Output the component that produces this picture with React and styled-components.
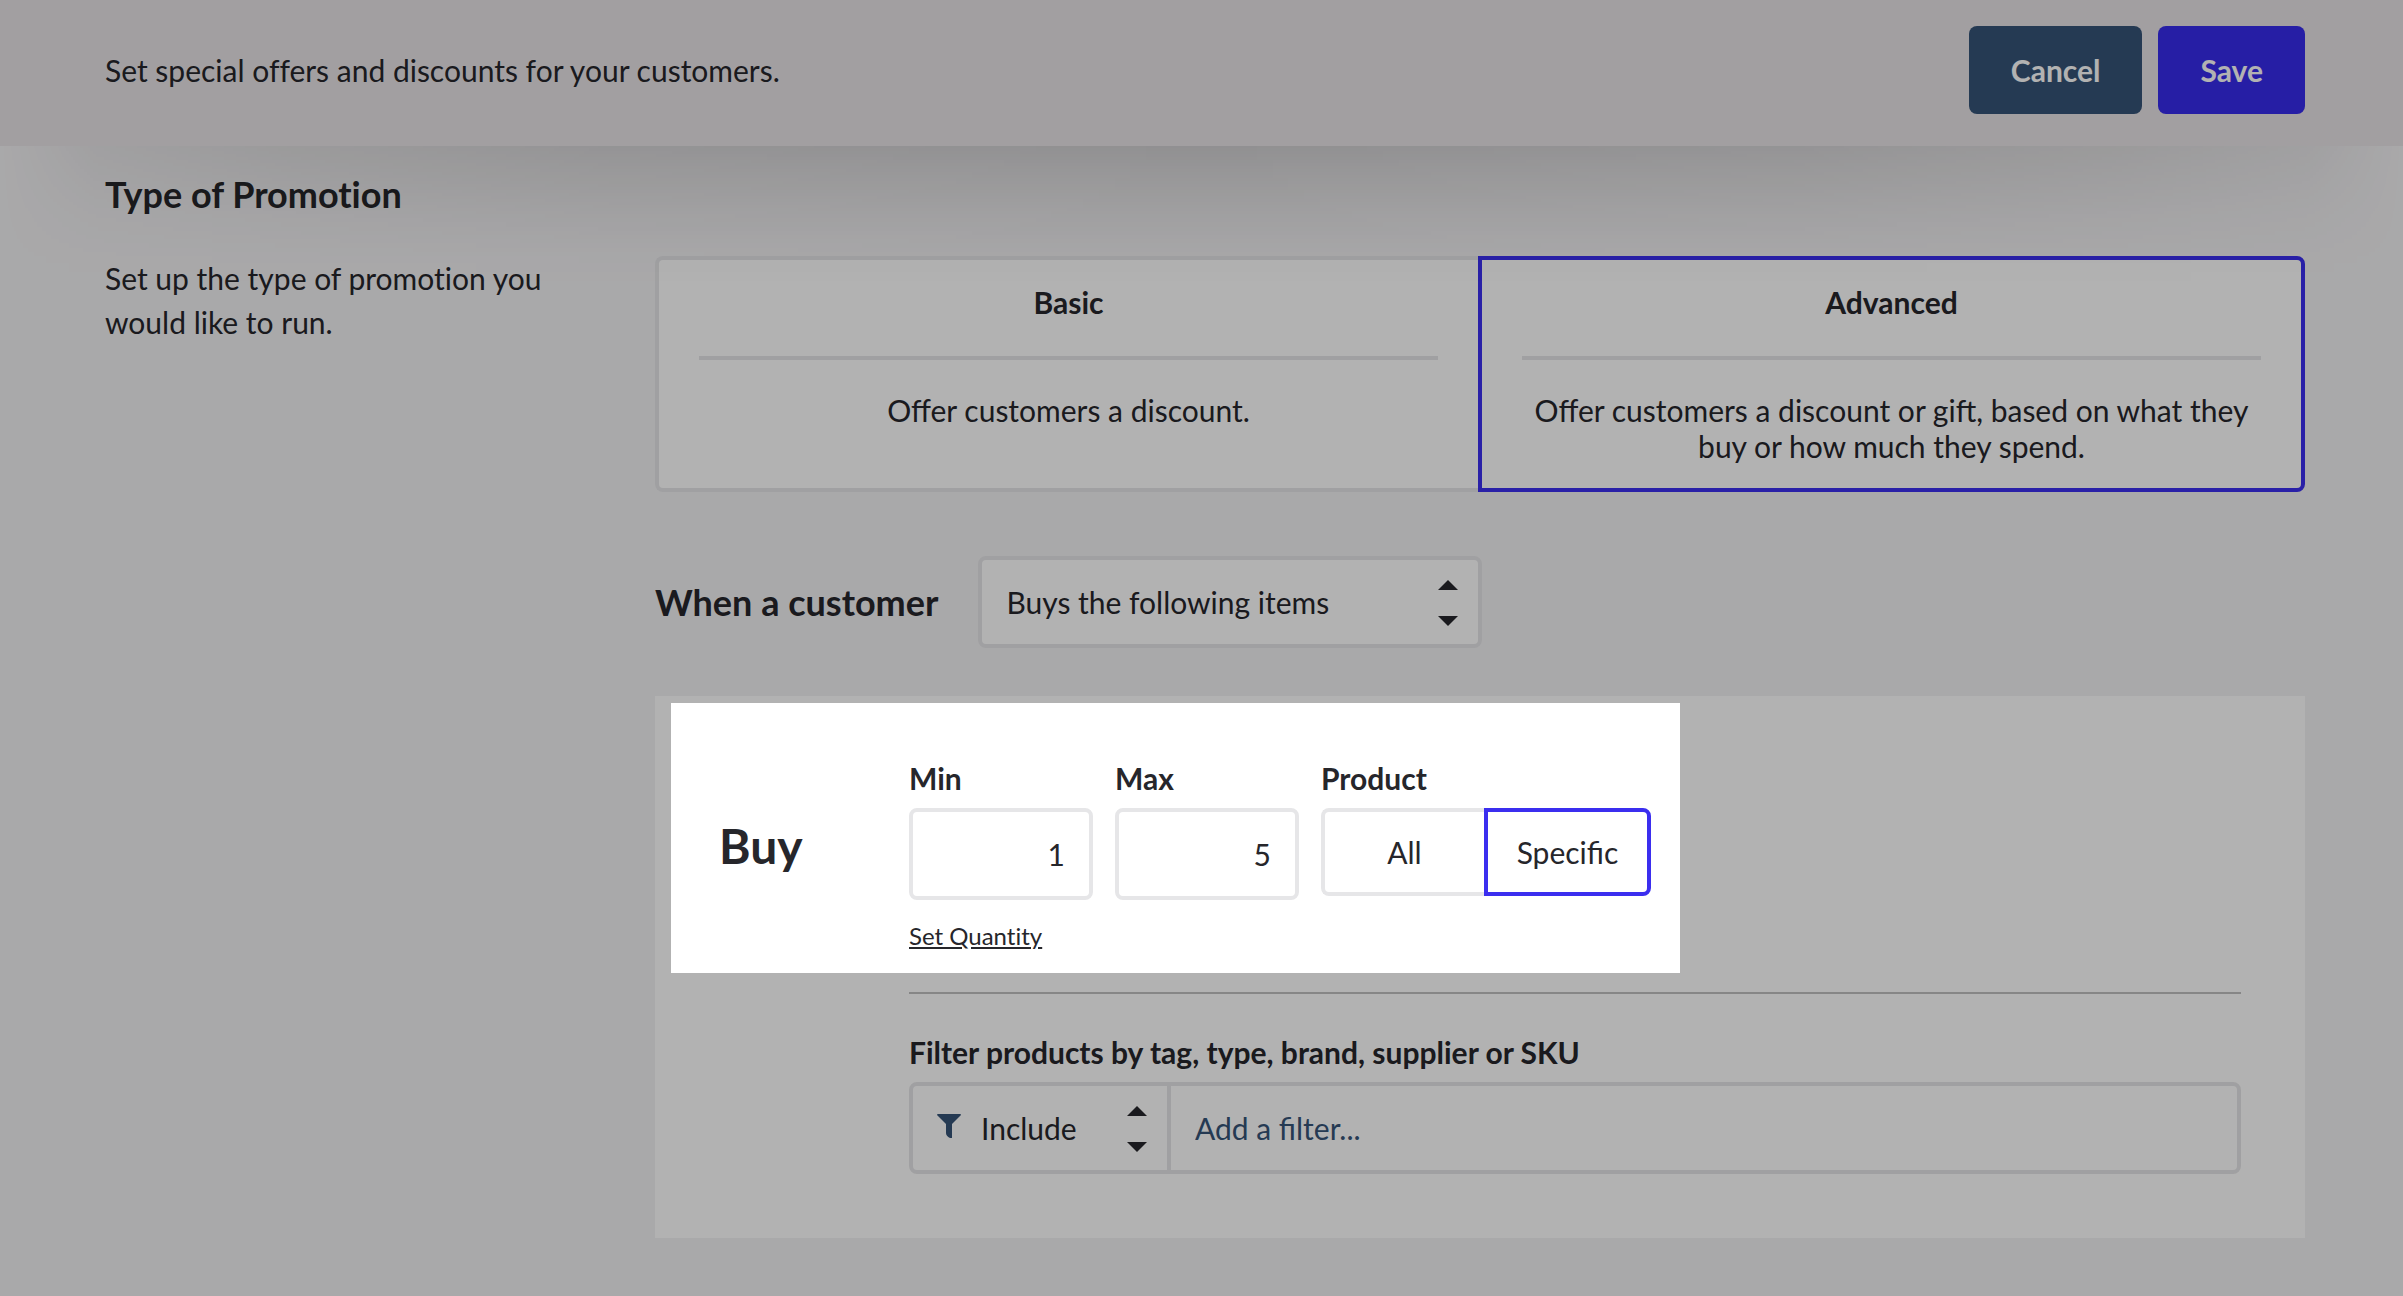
/* eslint-disable react/prop-types */
import React, { useState } from 'react';
import styled, { createGlobalStyle, css } from 'styled-components';

const Arrows = () => (
  <ArrowIcon viewBox="0 0 20 46" aria-hidden="true">
    <path d="M10 0 20 10H0z" />
    <path d="M0 36h20L10 46z" />
  </ArrowIcon>
);

const Funnel = () => (
  <FunnelIcon viewBox="0 0 24 24" aria-hidden="true">
    <path d="M1 0h22q1 0 1 1l-1 1-8 8v14h-2q-4-2-4-5v-9L1 2 0 1q0-1 1-1z" />
  </FunnelIcon>
);

const types = [
  { id: 'basic', title: 'Basic', text: 'Offer customers a discount.' },
  {
    id: 'advanced',
    title: 'Advanced',
    text: 'Offer customers a discount or gift, based on what they buy or how much they spend.',
  },
];

const App = () => {
  const [type, setType] = useState('advanced');
  const [product, setProduct] = useState('Specific');
  const [min, setMin] = useState('1');
  const [max, setMax] = useState('5');

  return (
    <Page>
      <GlobalStyle />
      <Header>
        <Text>Set special offers and discounts for your customers.</Text>
        <Actions>
          <Button type="button">Cancel</Button>
          <Button type="button" $primary>
            Save
          </Button>
        </Actions>
      </Header>

      <Main>
        <Title>Type of Promotion</Title>
        <Columns>
          <Text>Set up the type of promotion you would like to run.</Text>
          <div>
            <Segments>
              {types.map((t) => (
                <Card
                  key={t.id}
                  type="button"
                  aria-pressed={type === t.id}
                  $active={type === t.id}
                  onClick={() => setType(t.id)}
                >
                  <CardTitle>{t.title}</CardTitle>
                  <CardText>{t.text}</CardText>
                </Card>
              ))}
            </Segments>

            <Trigger>
              <Title as="label" htmlFor="trigger">
                When a customer
              </Title>
              <TriggerSelect>
                <Select id="trigger" defaultValue="items">
                  <option value="items">Buys the following items</option>
                  <option value="value">Spends the following amount</option>
                </Select>
                <Arrows />
              </TriggerSelect>
            </Trigger>

            <Panel>
              <PanelTitle>Buy</PanelTitle>
              <PanelBody>
                <Fields>
                  <Field>
                    <Label htmlFor="min">Min</Label>
                    <NumberInput
                      id="min"
                      inputMode="numeric"
                      value={min}
                      onChange={(e) => setMin(e.target.value)}
                    />
                  </Field>
                  <Field>
                    <Label htmlFor="max">Max</Label>
                    <NumberInput
                      id="max"
                      inputMode="numeric"
                      value={max}
                      onChange={(e) => setMax(e.target.value)}
                    />
                  </Field>
                  <Field $wide role="group" aria-labelledby="product">
                    <Label as="span" id="product">
                      Product
                    </Label>
                    <Segments>
                      {['All', 'Specific'].map((name) => (
                        <Toggle
                          key={name}
                          type="button"
                          aria-pressed={product === name}
                          $active={product === name}
                          onClick={() => setProduct(name)}
                        >
                          {name}
                        </Toggle>
                      ))}
                    </Segments>
                  </Field>
                </Fields>
                <Link href="#quantity">Set Quantity</Link>
                <Divider />
                <Label htmlFor="filter">
                  Filter products by tag, type, brand, supplier or SKU
                </Label>
                <FilterBox>
                  <FilterMode>
                    <Funnel />
                    <Select aria-label="Filter mode" defaultValue="include" $icon>
                      <option value="include">Include</option>
                      <option value="exclude">Exclude</option>
                    </Select>
                    <Arrows />
                  </FilterMode>
                  <FilterInput id="filter" placeholder="Add a filter..." />
                </FilterBox>
              </PanelBody>
              <Spotlight />
            </Panel>
          </div>
        </Columns>
      </Main>
    </Page>
  );
};

export default App;

const GlobalStyle = createGlobalStyle`
  *, *::before, *::after {
    box-sizing: border-box;
  }
  body {
    margin: 0;
    font-family: Lato, 'Open Sans', sans-serif;
    font-size: 30px;
    line-height: 36px;
    color: #26262b;
  }
  button, input, select {
    margin: 0;
    font: inherit;
    color: inherit;
  }
`;

const Page = styled.div`
  position: relative;
  min-height: 100vh;
  overflow: hidden;
  background: #f3f2f4;
`;

const Header = styled.header`
  position: relative;
  z-index: 1;
  display: flex;
  justify-content: space-between;
  align-items: center;
  padding: 26px 98px 32px 105px;
  background: #e8e4e7;

  /* wide shadow that thins out towards both ends of the bar */
  &::after {
    content: '';
    position: absolute;
    top: 100%;
    left: 0;
    right: 0;
    height: 140px;
    background: linear-gradient(
      rgba(0, 0, 0, 0.14),
      rgba(0, 0, 0, 0.05) 50%,
      rgba(0, 0, 0, 0.01) 80%,
      transparent
    );
    mask-image: linear-gradient(
      90deg,
      transparent,
      rgba(0, 0, 0, 0.35) 4%,
      rgba(0, 0, 0, 0.6) 12%,
      rgba(0, 0, 0, 0.85) 25%,
      #000 50%,
      rgba(0, 0, 0, 0.85) 75%,
      rgba(0, 0, 0, 0.6) 88%,
      rgba(0, 0, 0, 0.35) 96%,
      transparent
    );
    pointer-events: none;
  }
`;

const Text = styled.p`
  margin: 0;
  line-height: 44px;
  font-variant-ligatures: no-common-ligatures;
`;

const Actions = styled.div`
  display: flex;
  gap: 16px;
`;

const Button = styled.button`
  height: 88px;
  padding: 0 42px;
  border: none;
  border-radius: 8px;
  background: ${({ $primary }) => ($primary ? '#372cec' : '#355377')};
  color: #fff;
  font-weight: 700;
  cursor: pointer;
`;

const Main = styled.main`
  padding: 26px 98px 58px 105px;
`;

const Title = styled.h2`
  margin: 0;
  font-size: 36px;
  font-weight: 700;
  line-height: 44px;
  font-variant-ligatures: no-common-ligatures;
`;

const Columns = styled.div`
  display: grid;
  grid-template-columns: 1fr 3fr;
  margin-top: 40px;

  > ${Text} {
    padding-right: 100px;
  }
`;

const Segments = styled.div`
  display: flex;
`;

// one half of a two-way switch, the selected half closes the seam
const segment = css`
  box-sizing: content-box;
  flex: 1 1 0;
  border: 4px solid ${({ $active }) => ($active ? '#3b2eef' : '#e6e6e8')};
  background: #fff;
  cursor: pointer;

  &:first-child {
    border-radius: 8px 0 0 8px;
    ${({ $active }) => !$active && 'border-right: none;'}
  }
  &:last-child {
    border-radius: 0 8px 8px 0;
    ${({ $active }) => !$active && 'border-left: none;'}
  }
`;

const Card = styled.button`
  ${segment}
  display: flex;
  flex-direction: column;
  padding: 24px 40px;
`;

const CardTitle = styled.span`
  align-self: stretch;
  padding-bottom: 36px;
  border-bottom: 4px solid #e6e6e8;
  font-weight: 700;
`;

const CardText = styled.span`
  align-self: stretch;
  margin-top: 32px;
`;

const Trigger = styled.div`
  display: flex;
  align-items: center;
  gap: 40px;
  margin: 64px 0 48px;
`;

const TriggerSelect = styled.div`
  position: relative;
  width: 504px;
  height: 92px;
  border: 4px solid #e6e6e8;
  border-radius: 8px;
  background: #fff;
`;

const Select = styled.select`
  width: 100%;
  height: 100%;
  padding: 0 60px 0 ${({ $icon }) => ($icon ? 68 : 24)}px;
  border: none;
  background: transparent;
  appearance: none;
`;

const ArrowIcon = styled.svg`
  position: absolute;
  top: 20px;
  right: 20px;
  width: 20px;
  height: 46px;
  fill: #26262b;
  pointer-events: none;
`;

const FunnelIcon = styled.svg`
  position: absolute;
  top: 28px;
  left: 24px;
  width: 24px;
  height: 24px;
  fill: #355377;
  pointer-events: none;
`;

const Panel = styled.section`
  position: relative;
  display: flex;
  padding: 64px;
  background: #fff;
`;

const PanelTitle = styled.h3`
  flex: none;
  width: 190px;
  margin: 56px 0 0;
  font-size: 48px;
  line-height: 60px;
`;

const PanelBody = styled.div`
  flex: 1;
`;

const Fields = styled.div`
  display: flex;
  align-items: flex-start;
  gap: 22px;
`;

const Field = styled.div`
  width: ${({ $wide }) => ($wide ? 330 : 184)}px;
`;

const Label = styled.label`
  display: block;
  margin-bottom: 12px;
  font-weight: 700;
`;

const NumberInput = styled.input`
  display: block;
  width: 100%;
  height: 92px;
  padding: 0 24px;
  border: 4px solid #e6e6e8;
  border-radius: 8px;
  background: #fff;
  text-align: right;
`;

const Toggle = styled.button`
  ${segment}
  height: 80px;
  padding: 0;
`;

const Link = styled.a`
  display: table;
  margin-top: 24px;
  font-size: 24px;
  line-height: 24px;
  font-variant-ligatures: no-common-ligatures;
  color: inherit;
`;

const Divider = styled.hr`
  height: 2px;
  margin: 44px 0 40px;
  border: none;
  background: #c0c0c0;
`;

const FilterBox = styled.div`
  display: flex;
  height: 92px;
  border: 4px solid #e6e6e8;
  border-radius: 8px;
`;

const FilterMode = styled.div`
  position: relative;
  width: 258px;
  border-right: 4px solid #e6e6e8;
`;

const FilterInput = styled.input`
  flex: 1;
  padding: 0 24px;
  border: none;
  background: transparent;

  &::placeholder {
    color: #355377;
    opacity: 1;
  }
`;

// dims the whole page except for the quantity and product controls
const Spotlight = styled.div`
  position: absolute;
  top: 7px;
  left: 16px;
  z-index: 2;
  width: 1009px;
  height: 270px;
  box-shadow: 0 0 0 3000px rgba(0, 0, 0, 0.3);
  pointer-events: none;
`;
